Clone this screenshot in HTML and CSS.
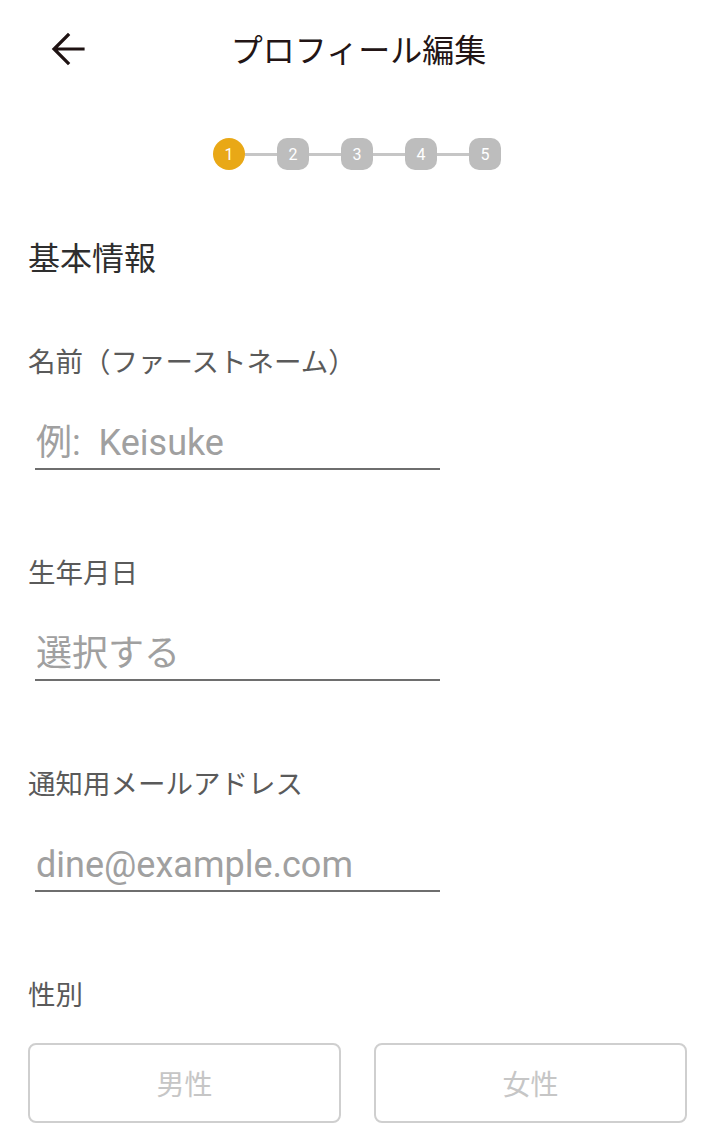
FILE: index.html
```html
<!DOCTYPE html>
<html lang="ja">
<head>
    <meta charset="UTF-8">
    <meta name="viewport" content="width=720, initial-scale=1.0">
    <title>プロフィール編集</title>
    <link rel="stylesheet" href="styles.css">
</head>
<body>
    <div class="pantalla">
        <div class="header">
            <span class="back">
                <svg width="36" height="36" viewBox="0 0 36 36">
                    <path d="M33 18H5 M18 4L4 18L18 32" fill="none" stroke="#1e1212" stroke-width="3.2" stroke-linecap="square"/>
                </svg>
            </span>
            <h1 class="titulo">プロフィール編集</h1>
        </div>

        <div class="pasos">
            <span class="paso activo">1</span>
            <span class="linea"></span>
            <span class="paso">2</span>
            <span class="linea"></span>
            <span class="paso">3</span>
            <span class="linea"></span>
            <span class="paso">4</span>
            <span class="linea"></span>
            <span class="paso">5</span>
        </div>

        <h2 class="seccion">基本情報</h2>

        <div class="campo">
            <p class="etiqueta">名前（ファーストネーム）</p>
            <div class="entrada">例:&nbsp; Keisuke</div>
        </div>

        <div class="campo">
            <p class="etiqueta">生年月日</p>
            <div class="entrada">選択する</div>
        </div>

        <div class="campo">
            <p class="etiqueta">通知用メールアドレス</p>
            <div class="entrada">dine@example.com</div>
        </div>

        <div class="campo">
            <p class="etiqueta">性別</p>
            <div class="botones">
                <div class="boton">男性</div>
                <div class="boton">女性</div>
            </div>
        </div>
    </div>
</body>
</html>
```

FILE: styles.css
```css
body {
    margin: 0;
    padding: 0;
    background: #fff;
    font-family: Roboto, "Noto Sans CJK JP", sans-serif;
}

.pantalla {
    width: 720px;
    height: 1136px;
    overflow: hidden;
}

/* cabecera */
.header {
    height: 96px;
    display: flex;
    align-items: center;
    justify-content: center;
    position: relative;
}

.back {
    position: absolute;
    left: 50px;
    top: 31px;
    width: 36px;
    height: 36px;
}

.titulo {
    margin: 0 0 0 -3px;
    font-family: "Noto Sans CJK JP", sans-serif;
    font-weight: 400;
    font-size: 32px;
    line-height: 44px;
    color: #231515;
}

/* pasos */
.pasos {
    display: flex;
    align-items: center;
    justify-content: center;
    margin-top: 42px;
    padding-right: 6px;
}

.paso {
    width: 32px;
    height: 32px;
    border-radius: 10px;
    background: #bdbdbd;
    color: #fff;
    font-size: 16px;
    display: flex;
    align-items: center;
    justify-content: center;
}

.paso.activo {
    background: #e9a816;
    border-radius: 50%;
}

.linea {
    width: 32px;
    height: 3px;
    background: #c6c6c6;
}

/* formulario */
.seccion {
    margin: 66px 0 0 28px;
    font-family: "Noto Sans CJK JP", sans-serif;
    font-weight: 400;
    font-size: 32px;
    line-height: 40px;
    color: #2e2e2e;
}

.campo {
    margin-left: 28px;
}

.seccion + .campo {
    margin-top: 64px;
}

.etiqueta {
    margin: 0;
    font-family: "Noto Sans CJK JP", sans-serif;
    font-size: 27.5px;
    line-height: 40px;
    color: #5a5a5a;
}

.entrada {
    width: 404px;
    margin: 41px 0 81px 7px;
    padding: 0 0 3px 1px;
    border-bottom: 2px solid #6e6e6e;
    font-size: 36px;
    line-height: 44px;
    color: #a0a0a0;
}

.botones {
    display: flex;
    gap: 33px;
    margin-top: 30px;
    padding-right: 33px;
}

.boton {
    flex: 1;
    height: 80px;
    box-sizing: border-box;
    border: 2px solid #cfcfcf;
    border-radius: 8px;
    display: flex;
    align-items: center;
    justify-content: center;
    font-family: "Noto Sans CJK JP", sans-serif;
    font-size: 28px;
    color: #c6c6c6;
}
```
